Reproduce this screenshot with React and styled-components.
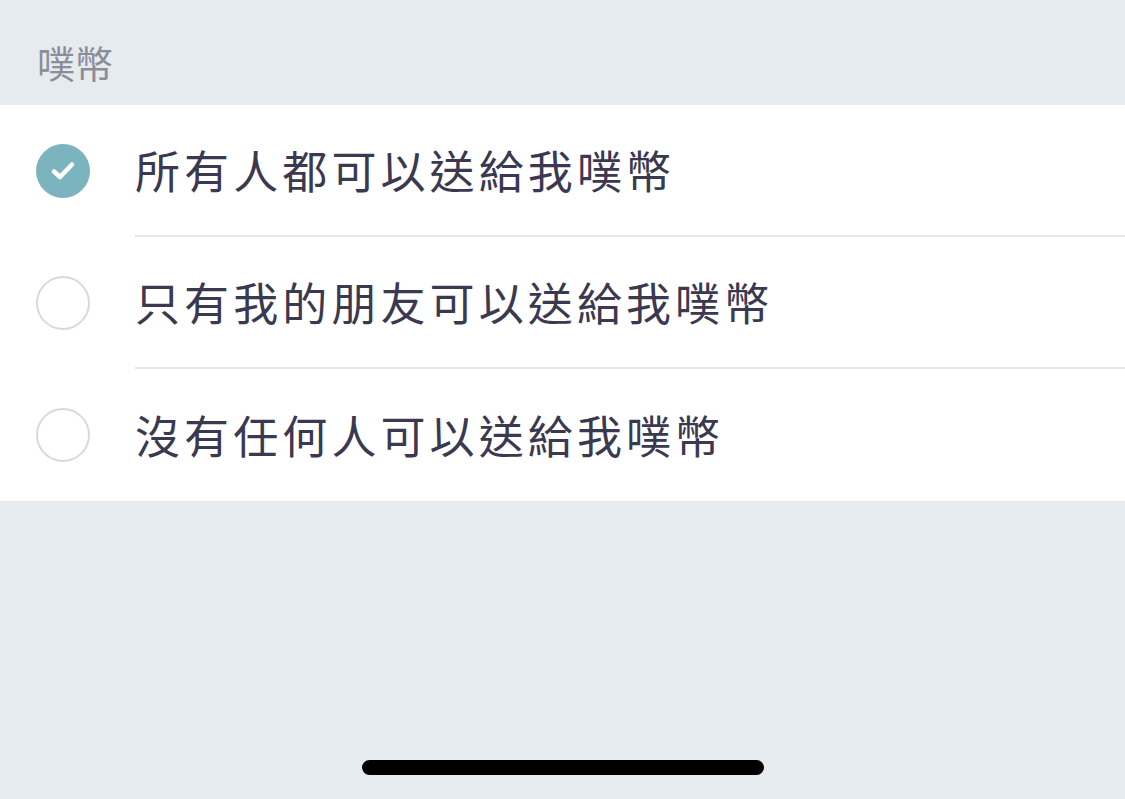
import React from 'react'
import styled, { createGlobalStyle } from 'styled-components'

const GlobalStyle = createGlobalStyle`
  html, body {
    margin: 0;
    padding: 0;
    background: #e6ebf0;
  }
  body {
    font-family: "Noto Sans CJK TC", "Noto Sans", sans-serif;
  }
`

const options = [
  { label: '所有人都可以送給我噗幣', checked: true },
  { label: '只有我的朋友可以送給我噗幣', checked: false },
  { label: '沒有任何人可以送給我噗幣', checked: false },
]

const App = () => {
  return (
    <Page>
      <GlobalStyle />
      <SectionHeader>噗幣</SectionHeader>
      <List>
        {options.map((opt, i) => (
          <Row key={opt.label}>
            <Radio checked={opt.checked}>
              {opt.checked && (
                <CheckIcon width="28" height="28" viewBox="0 0 28 28">
                  <path d="M5 14.5l6 5.5 12-12.5" fill="none" stroke="#fff" strokeWidth="4.5" strokeLinecap="round" strokeLinejoin="round" />
                </CheckIcon>
              )}
            </Radio>
            <Label last={i === options.length - 1}>{opt.label}</Label>
          </Row>
        ))}
      </List>
      <Spacer />
      <HomeIndicator />
    </Page>
  )
}

export default App

// Styled Components
const Page = styled.div`
  width: 1125px;
  height: 799px;
  background: #e6ebf0;
  display: flex;
  flex-direction: column;
`

const SectionHeader = styled.div`
  height: 105px;
  box-sizing: border-box;
  padding: 41px 0 0 37px;
  font-size: 38px;
  line-height: 1.1;
  color: #8b8d99;
`

const List = styled.div`
  background: #ffffff;
  display: flex;
  flex-direction: column;
`

const Row = styled.div`
  display: flex;
  align-items: stretch;
`

const Radio = styled.div`
  width: 54px;
  height: 54px;
  box-sizing: border-box;
  border-radius: 50%;
  margin: 39px 45px 0 36px;
  flex-shrink: 0;
  display: flex;
  align-items: center;
  justify-content: center;
  background: ${p => (p.checked ? '#7bb3bf' : '#fff')};
  border: ${p => (p.checked ? 'none' : '2px solid #d9d9dc')};
`

const CheckIcon = styled.svg`
  display: block;
  flex-shrink: 0;
`

const Label = styled.div`
  flex: 1;
  height: 132px;
  box-sizing: border-box;
  display: flex;
  align-items: center;
  padding-bottom: 2px;
  font-size: 45px;
  letter-spacing: 4.1px;
  color: #3a3950;
  border-bottom: ${p => (p.last ? 'none' : '2px solid #e5e7eb')};
`

const Spacer = styled.div`
  flex: 1;
`

const HomeIndicator = styled.div`
  align-self: center;
  width: 402px;
  height: 15px;
  border-radius: 8px;
  background: #000;
  margin-bottom: 24px;
`
